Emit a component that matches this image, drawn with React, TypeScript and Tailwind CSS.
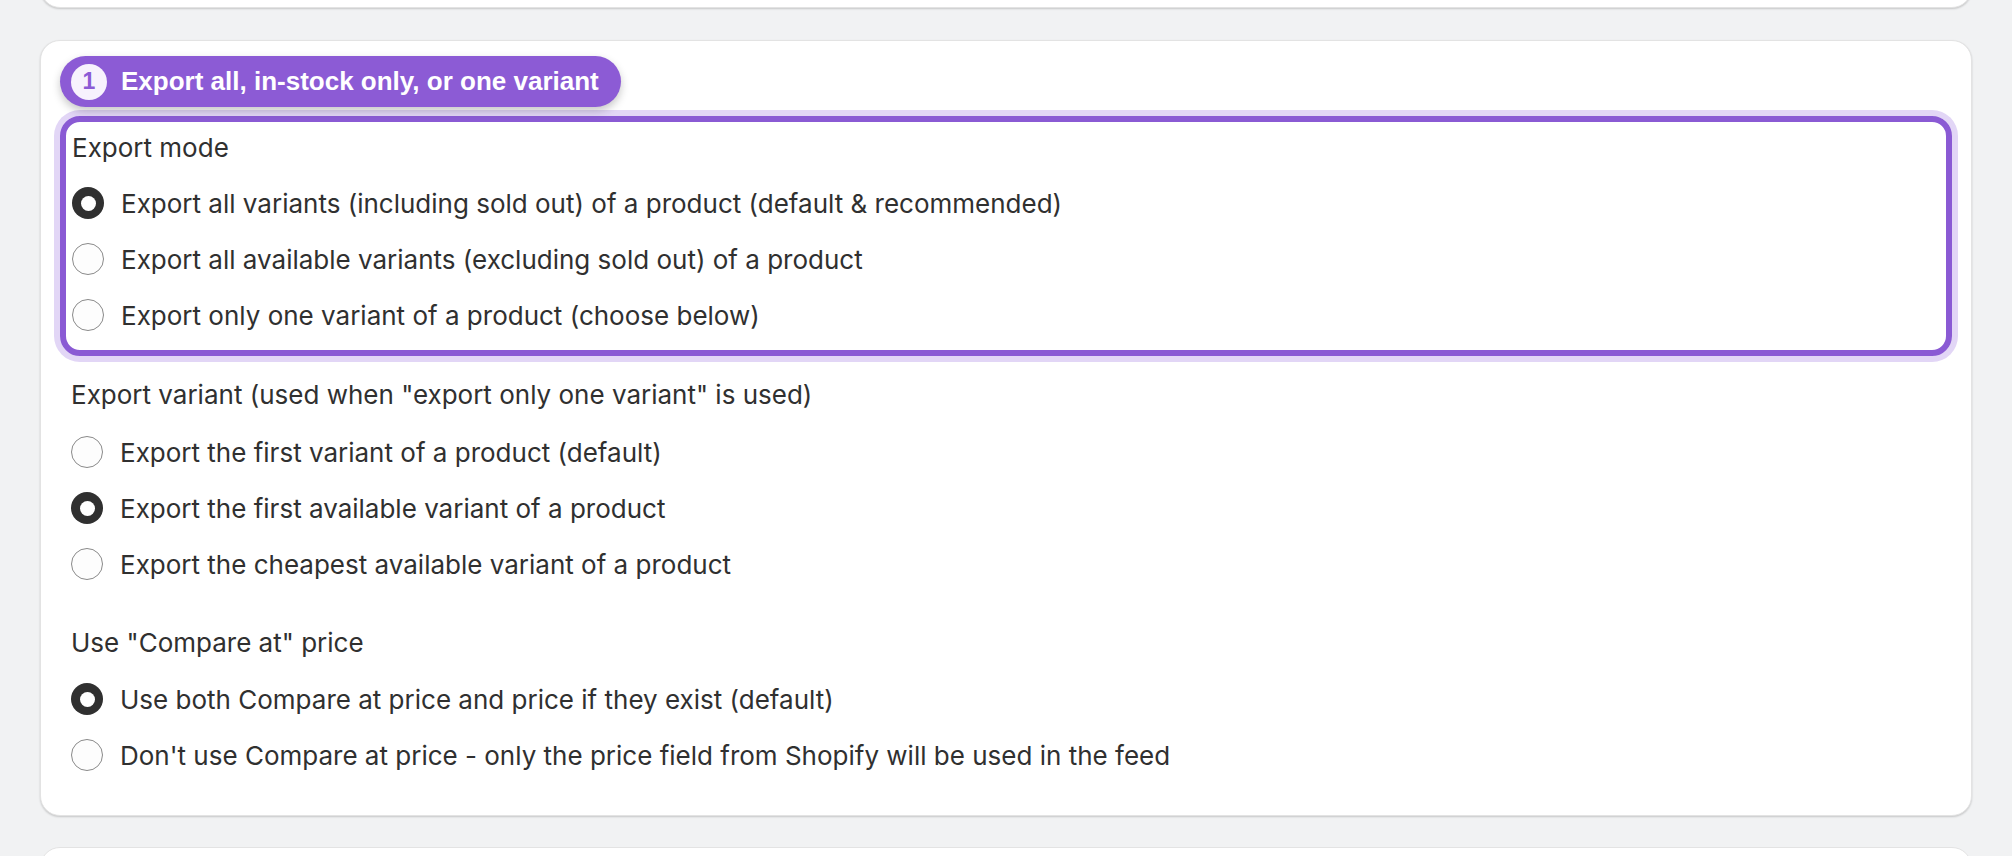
import React from "react";

type Option = { label: string; checked?: boolean };

function Radio({ checked }: { checked?: boolean }) {
  return checked ? (
    <span className="flex h-[32px] w-[32px] shrink-0 items-center justify-center rounded-full bg-[#303030]">
      <span className="h-[15px] w-[15px] rounded-full bg-white" />
    </span>
  ) : (
    <span className="h-[32px] w-[32px] shrink-0 rounded-full border border-[#8a8a8a] bg-[#fdfdfd]" />
  );
}

function OptionRow({ label, checked }: Option) {
  return (
    <label className="flex h-[56px] items-center gap-[17px]">
      <Radio checked={checked} />
      <span>{label}</span>
    </label>
  );
}

const exportMode: Option[] = [
  { label: "Export all variants (including sold out) of a product (default & recommended)", checked: true },
  { label: "Export all available variants (excluding sold out) of a product" },
  { label: "Export only one variant of a product (choose below)" },
];

const exportVariant: Option[] = [
  { label: "Export the first variant of a product (default)" },
  { label: "Export the first available variant of a product", checked: true },
  { label: "Export the cheapest available variant of a product" },
];

const comparePrice: Option[] = [
  { label: "Use both Compare at price and price if they exist (default)", checked: true },
  { label: "Don't use Compare at price - only the price field from Shopify will be used in the feed" },
];

export default function App() {
  return (
    <div
      className="h-[856px] overflow-hidden bg-[#f1f2f3] px-[40px] text-[26px] text-[#303030]"
      style={{ fontFamily: "Inter, 'Noto Sans', sans-serif" }}
    >
      {/* previous section card, scrolled mostly out of view */}
      <div className="-mt-[92px] h-[100px] rounded-[20px] border border-[#e3e3e3] bg-white shadow-[0_1px_2px_rgba(0,0,0,0.18)]" />

      {/* variant export settings */}
      <section className="mt-[32px] rounded-[20px] border border-[#e3e3e3] bg-white px-[19px] pb-[32px] pt-[15px] shadow-[0_1px_2px_rgba(0,0,0,0.18)]">
        <div
          className="inline-flex h-[51px] items-center gap-[14px] rounded-full bg-[#8c5bd5] pl-[11px] pr-[22px] text-white shadow-[0_4px_8px_rgba(0,0,0,0.22)]"
          style={{ fontFamily: "'Liberation Sans', Arial, sans-serif" }}
        >
          <span className="flex h-[36px] w-[36px] items-center justify-center rounded-full bg-[#f7f2fd] text-[23px] font-bold text-[#8c5bd5]">
            1
          </span>
          <span className="text-[26px] font-bold">Export all, in-stock only, or one variant</span>
        </div>

        <div className="mt-[9px] rounded-[20px] border-[6px] border-[#8a5ad4] pb-[7px] pl-[6px] pt-[8px] shadow-[0_0_0_6px_#e2d6f6]">
          <div className="mb-[9px] leading-[36px]">Export mode</div>
          {exportMode.map((o) => (
            <OptionRow key={o.label} {...o} />
          ))}
        </div>

        <div className="pl-[11px]">
          <div className="mb-[11px] mt-[21px] leading-[36px]">
            Export variant (used when "export only one variant" is used)
          </div>
          {exportVariant.map((o) => (
            <OptionRow key={o.label} {...o} />
          ))}

          <div className="mb-[10px] mt-[33px] leading-[36px]">Use "Compare at" price</div>
          {comparePrice.map((o) => (
            <OptionRow key={o.label} {...o} />
          ))}
        </div>
      </section>

      {/* next section card */}
      <div className="mt-[31px] h-[100px] rounded-[20px] border border-[#e3e3e3] bg-white" />
    </div>
  );
}
